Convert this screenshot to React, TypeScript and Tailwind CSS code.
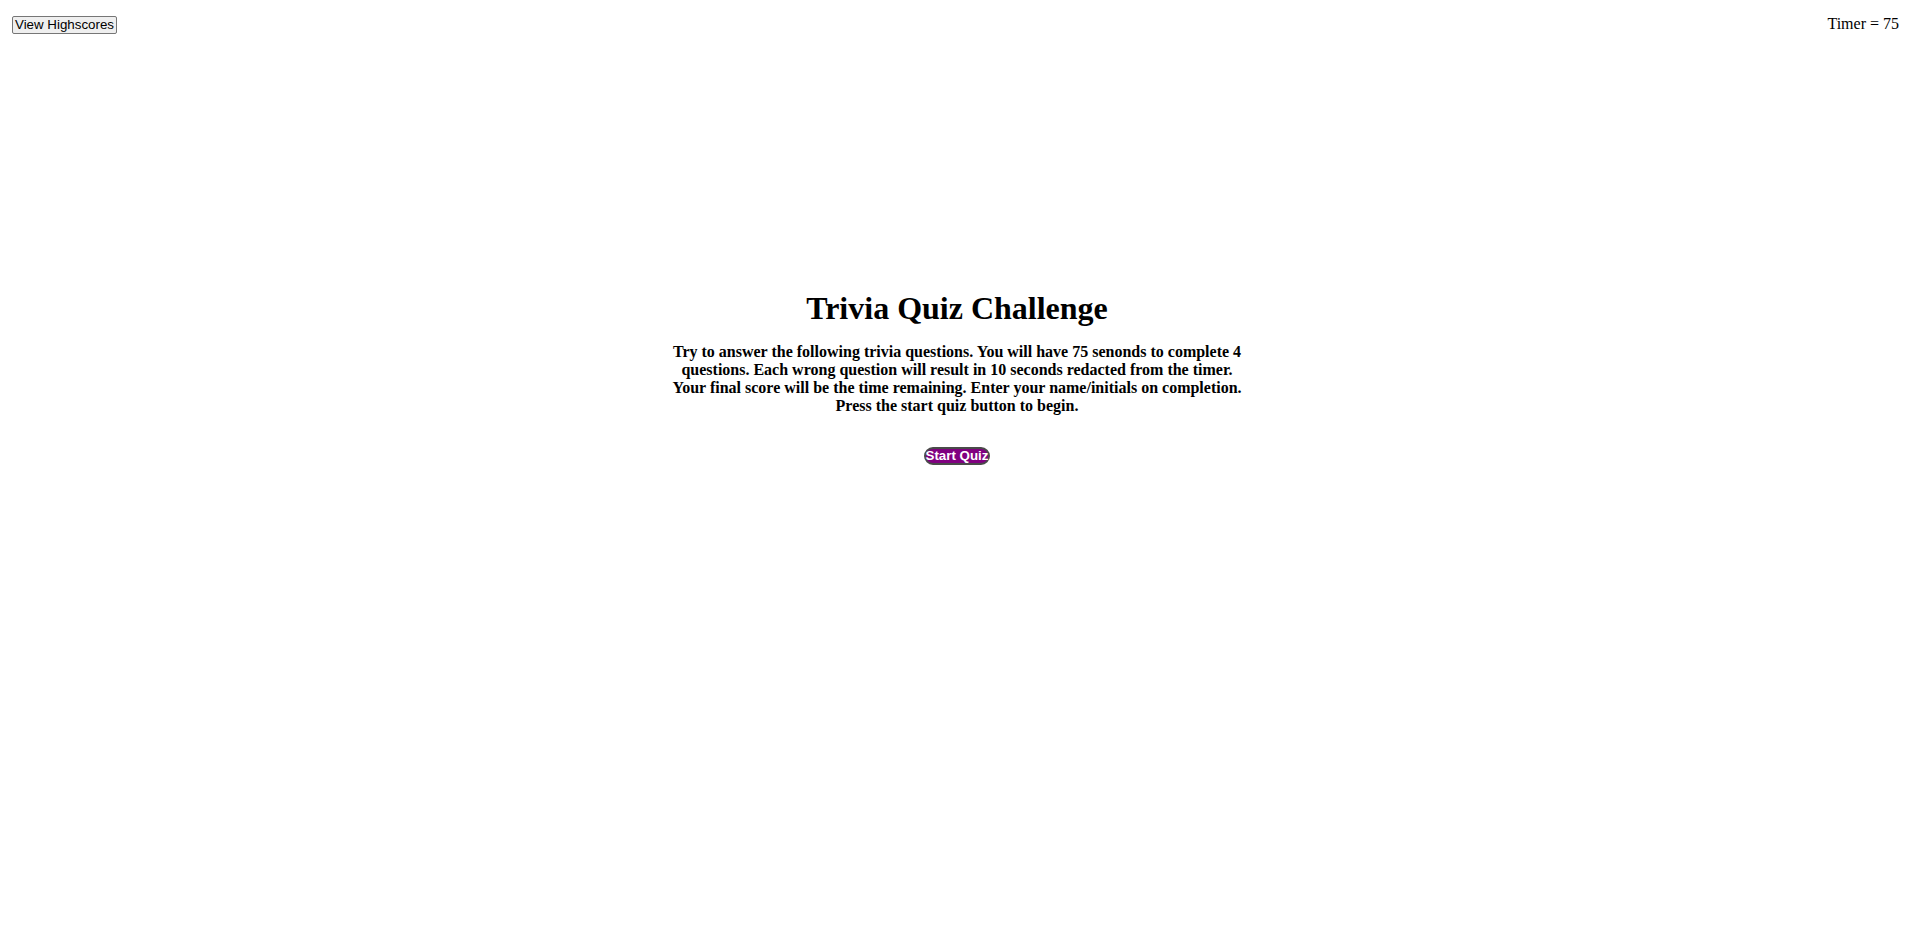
import React from "react";

export default function App() {
  return (
    <div className="min-h-[928px] w-full bg-white text-black" style={{ fontFamily: '"Liberation Serif", "Times New Roman", serif' }}>
      <div className="flex items-start justify-between pl-[12px] pr-[10px] pt-[15px]">
        <button
          className="mt-[1px] h-[18px] rounded-[2px] border border-[#767676] bg-[#efefef] px-[2px] text-[13.333px] leading-[16px] text-black"
          style={{ fontFamily: '"Liberation Sans", Arial, sans-serif' }}
        >
          View Highscores
        </button>
        <div className="text-[16px] leading-[18px]">Timer = 75</div>
      </div>
      <div className="mt-[256px] flex flex-col items-center pl-[5px]">
        <h1 className="text-[32px] font-bold leading-[37px]">Trivia Quiz Challenge</h1>
        <p className="mt-[16px] w-[575px] text-center text-[16px] font-bold leading-[18px]">
          Try to answer the following trivia questions. You will have 75 senonds to complete 4 questions. Each wrong question will result in 10 seconds redacted from the timer. Your final score will be the time remaining. Enter your name/initials on completion. Press the start quiz button to begin.
        </p>
        <button
          className="mt-[32px] flex h-[18px] items-center rounded-full border-2 border-[#4a4a4a] bg-[#800080] px-0 text-[13.333px] font-bold leading-[14px] text-white"
          style={{ fontFamily: '"Liberation Sans", Arial, sans-serif' }}
        >
          Start Quiz
        </button>
      </div>
    </div>
  );
}
